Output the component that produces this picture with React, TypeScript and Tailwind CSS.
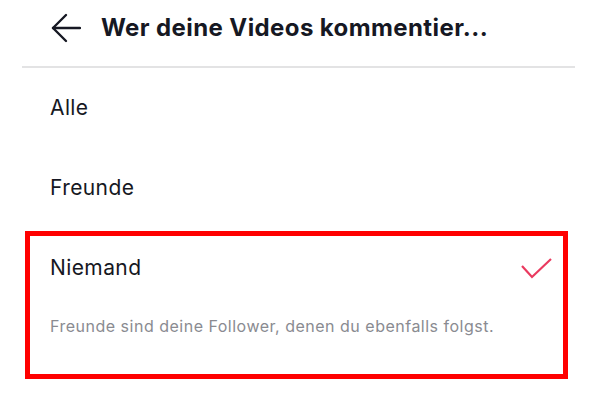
const font = { fontFamily: "Inter, 'Noto Sans', sans-serif" };

export default function App() {
  return (
    <div className="w-[600px] h-[400px] bg-white overflow-hidden" style={font}>
      {/* Header */}
      <div className="h-[66px] pb-[10px] flex items-center">
        <div className="w-[101px] flex items-center pl-[51px]">
          <svg width="30" height="30" viewBox="0 0 30 30" fill="none" stroke="#161823" strokeWidth="2.4" strokeLinecap="round" strokeLinejoin="round">
            <path d="M15 2 L2 15 L15 28" />
            <path d="M2 15 H29" />
          </svg>
        </div>
        <h1 className="text-[24px] font-bold text-[#161823] tracking-[0.4px]">Wer deine Videos kommentier...</h1>
      </div>
      <div className="ml-[22px] mr-[25px] h-[2px] bg-[#e3e3e4]" />

      {/* Options */}
      <div className="h-[80px] flex items-center pl-[50px] text-[21px] tracking-[0.4px] text-[#161823]">Alle</div>
      <div className="h-[80px] flex items-center pl-[50px] text-[21px] tracking-[0.4px] text-[#161823]">Freunde</div>

      <div className="mt-[3px] ml-[25px] w-[543px] h-[148px] border-[5px] border-[#ff0000] px-[20px]">
        <div className="h-[64px] flex items-center justify-between">
          <span className="text-[21px] tracking-[0.4px] text-[#161823]">Niemand</span>
          <svg width="32" height="24" viewBox="0 0 32 24" className="mr-[-9px]">
            <path d="M2 10 L12 21 L31 3" fill="none" stroke="#ea3a5f" strokeWidth="2.2" strokeLinejoin="miter" />
          </svg>
        </div>
        <p className="mt-[14px] text-[16px] tracking-[0.5px] text-[#8a8b91]">Freunde sind deine Follower, denen du ebenfalls folgst.</p>
      </div>
    </div>
  );
}
